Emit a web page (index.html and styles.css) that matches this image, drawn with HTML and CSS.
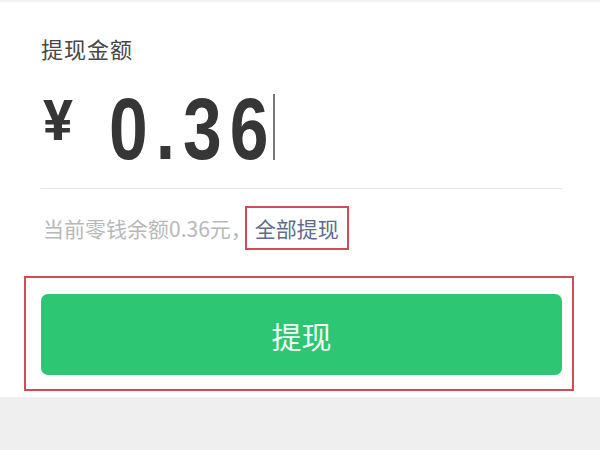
FILE: index.html
```html
<!DOCTYPE html>
<html lang="zh-CN">
<head>
<meta charset="utf-8">
<title>提现</title>
<link rel="stylesheet" href="styles.css">
</head>
<body>
<div class="page">
  <div class="top-edge"></div>
  <main class="main">
    <div class="label">提现金额</div>
    <div class="amount-row"><span class="yen">¥</span><span class="num">0.36</span><span class="cursor"></span></div>
    <div class="divider"></div>
    <div class="balance-row">
      <span class="balance">当前零钱余额0.36元，</span>
      <span class="all-link">全部提现</span>
    </div>
    <div class="mark-box">
      <button class="btn">提现</button>
    </div>
  </main>
  <div class="footer"></div>
</div>
</body>
</html>
```

FILE: styles.css
```css
html, body {
  margin: 0;
  padding: 0;
  width: 600px;
  height: 450px;
  overflow: hidden;
  background: #efefef;
  font-family: "Noto Sans CJK SC", "Noto Sans", sans-serif;
}

.page {
  display: flex;
  flex-direction: column;
  height: 450px;
}

.top-edge {
  height: 4px;
  background: linear-gradient(#f1f1f1, #ffffff);
}

.main {
  background: #ffffff;
  padding: 0 38px 6px 41px;
  display: flex;
  flex-direction: column;
}

.label {
  margin-top: 29px;
  font-size: 22px;
  line-height: 30px;
  letter-spacing: 1px;
  color: #474747;
}

.amount-row {
  height: 125px;
  line-height: 117px;
  color: #363636;
  white-space: nowrap;
}

.yen {
  font-family: "Roboto", "Liberation Sans", sans-serif;
  font-weight: 700;
  font-size: 56px;
  vertical-align: 19px;
  margin-left: 2px;
  margin-right: 36px;
}

.num {
  display: inline-block;
  font-family: "Liberation Sans", "Roboto", sans-serif;
  font-weight: bold;
  font-size: 87px;
  letter-spacing: 10px;
  transform: scaleX(0.8);
  transform-origin: 0 50%;
}

.cursor {
  display: inline-block;
  width: 2px;
  height: 66px;
  margin-left: -45px;
  vertical-align: -1px;
  background: #777777;
}

.divider {
  height: 1px;
  background: #e6e6e6;
}

.balance-row {
  display: flex;
  align-items: center;
  padding-top: 17px;
  padding-left: 2px;
  font-size: 21px;
}

.balance {
  color: #b8b8b8;
}

.all-link {
  margin-left: -7px;
  border: 2px solid #d34b57;
  padding: 0 8px;
  line-height: 40px;
  color: #5e6b8a;
}

.mark-box {
  margin: 26px -12px 0 -17px;
  border: 2px solid #d34b57;
  padding: 16px 10px 14px 15px;
}

.btn {
  display: block;
  width: 100%;
  height: 81px;
  border: none;
  border-radius: 7px;
  background: #2dc773;
  color: #eefbf2;
  font-family: "Noto Sans CJK SC", "Noto Sans", sans-serif;
  font-size: 30px;
  padding: 0;
}

.footer {
  flex: 1;
  background: #efefef;
}
```
